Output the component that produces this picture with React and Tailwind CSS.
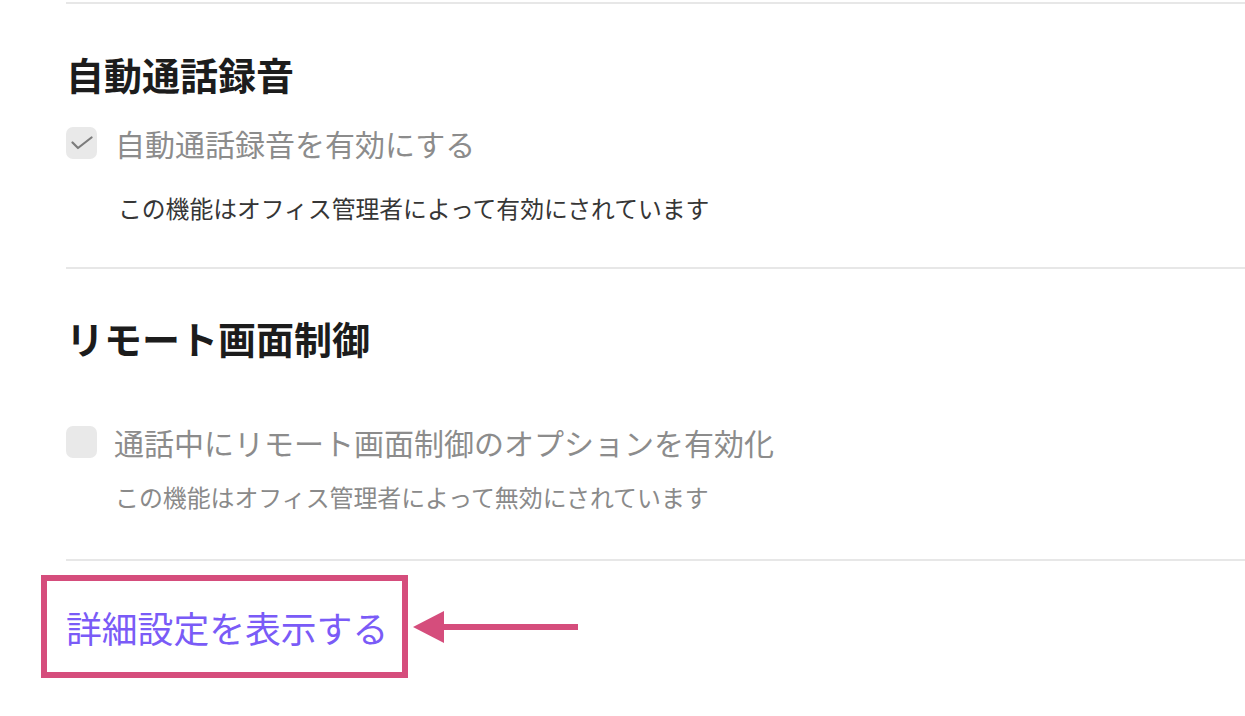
import React from 'react';

const font = { fontFamily: '"Noto Sans CJK JP", "Noto Sans", sans-serif' };

const CheckBox = ({ checked }) => (
  <span className="w-[31px] h-[32px] shrink-0 rounded-[7px] bg-[#e9e9e9] flex items-center justify-center">
    {checked && (
      <svg width="22" height="14" viewBox="0 0 22 14" fill="none">
        <path d="M1.5 6.5 L7 12 L20.5 1.5" stroke="#7c7c7c" strokeWidth="2.2" strokeLinecap="round" strokeLinejoin="round" />
      </svg>
    )}
  </span>
);

const Divider = () => <div className="h-[2px] bg-[#e7e7e7]" />;

export default function App() {
  return (
    <div className="w-[1245px] h-[716px] bg-white overflow-hidden pl-[66px] pt-[2px]" style={font}>
      <Divider />

      {/* 自動通話録音 */}
      <h2 className="mt-[48px] text-[38px] leading-[43px] font-bold text-[#1c1c1c]">自動通話録音</h2>
      <label className="mt-[32px] flex items-center gap-[18px]">
        <CheckBox checked />
        <span className="text-[30px] leading-[32px] text-[#8c8c8c]">自動通話録音を有効にする</span>
      </label>
      <p className="mt-[35px] ml-[52px] text-[23.8px] leading-[28px] text-[#363636]">
        この機能はオフィス管理者によって有効にされています
      </p>
      <div className="mt-[45px]">
        <Divider />
      </div>

      {/* リモート画面制御 */}
      <h2 className="mt-[47px] text-[38px] leading-[43px] font-bold text-[#1c1c1c]">リモート画面制御</h2>
      <label className="mt-[67px] flex items-center gap-[17px]">
        <CheckBox />
        <span className="text-[30px] leading-[32px] text-[#8c8c8c]">通話中にリモート画面制御のオプションを有効化</span>
      </label>
      <p className="mt-[25px] ml-[49px] text-[23.9px] leading-[28px] text-[#8a8a8a]">
        この機能はオフィス管理者によって無効にされています
      </p>
      <div className="mt-[48px]">
        <Divider />
      </div>

      {/* 詳細設定 */}
      <div className="relative mt-[14px] h-[103px] flex items-center">
        <a href="#" className="text-[35.8px] leading-[42px] text-[#7a5bf7]">詳細設定を表示する</a>
        <div className="absolute left-[-25px] top-0 w-[367px] h-[103px] border-[6px] border-[#d54d7c] pointer-events-none" />
        <svg className="absolute left-[347px] top-[34px]" width="166" height="36" viewBox="0 0 166 36">
          <polygon points="0,18 31,2 31,34" fill="#d54d7c" />
          <rect x="28" y="15" width="137" height="6" fill="#d54d7c" />
        </svg>
      </div>
    </div>
  );
}
